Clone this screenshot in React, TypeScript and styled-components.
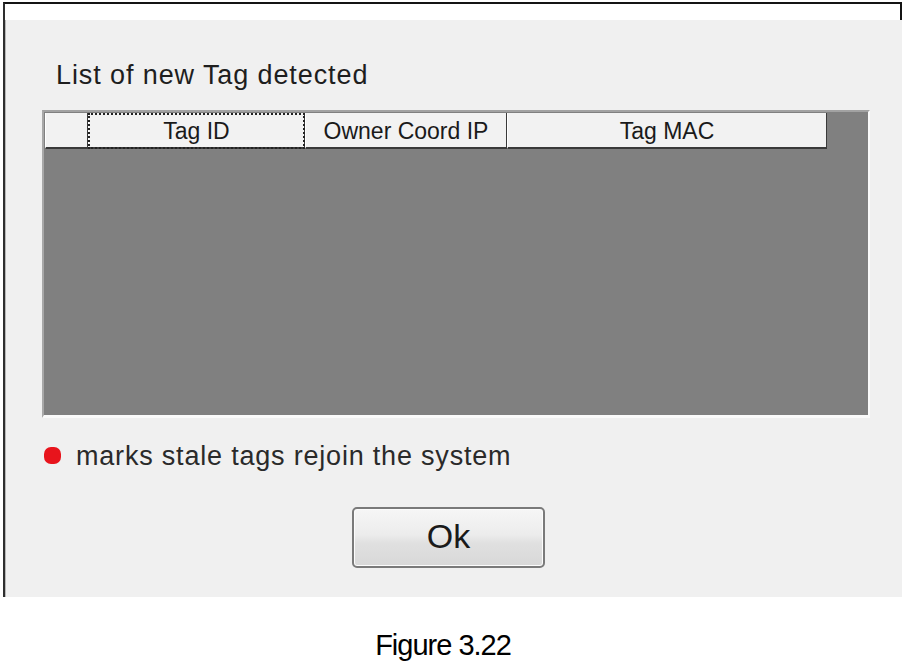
import React from "react";
import styled, { createGlobalStyle } from "styled-components";

const Global = createGlobalStyle`
  html, body { margin: 0; padding: 0; background: #ffffff; }
  body { font-family: "Liberation Sans", Arial, sans-serif; }
`;

const Page = styled.div`
  width: 906px;
  height: 664px;
  display: flex;
  flex-direction: column;
  padding-top: 2px;
  box-sizing: border-box;
`;

const Frame = styled.div`
  margin-left: 3px;
  width: 897px;
  border-top: 2px solid #141414;
  border-left: 2px solid #2e2e2e;
  display: flex;
  flex-direction: column;
`;

const TitleStrip = styled.div`
  height: 16px;
  background: #ffffff;
  border-right: 2px solid #141414;
`;

const Body = styled.div`
  height: 577px;
  background: #f0f0f0;
  border-left: 1px solid #b8b8b8;
  box-sizing: border-box;
  padding: 39px 0 0 0;
  display: flex;
  flex-direction: column;
`;

const Heading = styled.div`
  margin-left: 50px;
  font-size: 27px;
  line-height: 32px;
  letter-spacing: 0.9px;
  color: #1e1e1e;
`;

const ListView = styled.div`
  margin-top: 19px;
  margin-left: 36px;
  width: 828px;
  height: 308px;
  box-sizing: border-box;
  border-top: 2px solid #a2a2a2;
  border-left: 2px solid #a8a8a8;
  border-right: 2px solid #fafafa;
  border-bottom: 3px solid #fafafa;
  background: #808080;
  display: flex;
  flex-direction: column;
`;

const HeaderRow = styled.div`
  display: flex;
  height: 36px;
  margin-top: 1px;
  margin-left: 1px;
`;

const HeaderCell = styled.div<{ $w: number; $focus?: boolean }>`
  width: ${(p) => p.$w}px;
  box-sizing: border-box;
  background: #f2f2f2;
  border-right: 1px solid #3a3a3a;
  border-bottom: 2px solid #3a3a3a;
  border-left: 1px solid #ffffff;
  display: flex;
  align-items: center;
  justify-content: center;
  font-size: 23px;
  color: #1a1a1a;
  padding-top: 2px;
  outline: ${(p) => (p.$focus ? "2px dotted #222" : "none")};
  outline-offset: -2px;
`;

const Legend = styled.div`
  margin-top: 22px;
  margin-left: 38px;
  display: flex;
  align-items: center;
  gap: 15px;
  font-size: 27px;
  line-height: 32px;
  letter-spacing: 0.8px;
  color: #2a2a2a;
`;

const StaleDot = styled.span`
  width: 17px;
  height: 17px;
  border-radius: 7px;
  background: #e8141c;
  display: inline-block;
  margin-top: -2px;
`;

const OkButton = styled.button`
  margin-top: 35px;
  margin-left: 346px;
  width: 193px;
  height: 61px;
  box-sizing: border-box;
  border: 2px solid #7a7a7a;
  border-radius: 5px;
  background: linear-gradient(#f6f6f6 0%, #ececec 45%, #e0e0e0 60%, #d8d8d8 100%);
  box-shadow: inset 0 0 0 1px #fcfcfc;
  font-family: "Liberation Sans", Arial, sans-serif;
  font-size: 34px;
  color: #1a1a1a;
  padding: 0 0 2px 0;
  cursor: default;
`;

const Caption = styled.div`
  margin-top: 32px;
  text-align: center;
  margin-right: 20px;
  font-size: 29px;
  line-height: 32px;
  letter-spacing: -1px;
  color: #000000;
`;

const columns = [
  { label: "", w: 43 },
  { label: "Tag ID", w: 217, focus: true },
  { label: "Owner Coord IP", w: 202 },
  { label: "Tag MAC", w: 320 },
];

export default function App() {
  return (
    <>
      <Global />
      <Page>
        <Frame>
          <TitleStrip />
          <Body>
            <Heading>List of new Tag detected</Heading>
            <ListView>
              <HeaderRow>
                {columns.map((c, i) => (
                  <HeaderCell key={i} $w={c.w} $focus={c.focus}>
                    {c.label}
                  </HeaderCell>
                ))}
              </HeaderRow>
            </ListView>
            <Legend>
              <StaleDot />
              <span>marks stale tags rejoin the system</span>
            </Legend>
            <OkButton>Ok</OkButton>
          </Body>
        </Frame>
        <Caption>Figure 3.22</Caption>
      </Page>
    </>
  );
}
